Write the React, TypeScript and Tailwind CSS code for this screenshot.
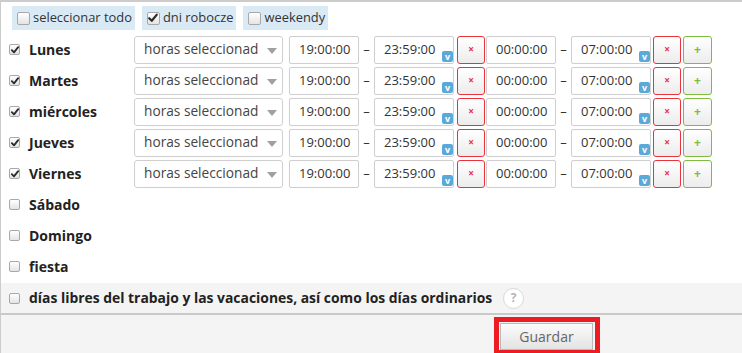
import React from "react";

function Box({ checked, size = 11 }: { checked?: boolean; size?: number }) {
  return (
    <span
      className="relative inline-flex shrink-0 items-center justify-center rounded-[2px] border border-[#a8a8a8] bg-gradient-to-b from-white to-[#e4e4e4]"
      style={{ width: size, height: size }}
    >
      {checked && (
        <svg viewBox="0 0 12 12" className="absolute" style={{ width: size - 1, height: size - 1 }}>
          <path d="M2.2 6.2 L4.8 8.8 L9.8 2.6" fill="none" stroke="#2b2b2b" strokeWidth="2.2" strokeLinecap="round" strokeLinejoin="round" />
        </svg>
      )}
    </span>
  );
}

function Chip({ label, checked }: { label: string; checked?: boolean }) {
  return (
    <div className="flex h-[24px] items-center gap-[3px] bg-[#daeaf5] pl-[5px] pr-[3px] text-[12.9px] text-[#333]">
      <Box checked={checked} size={13} />
      <span>{label}</span>
    </div>
  );
}

function Vbadge() {
  return (
    <span className="absolute bottom-[1px] right-[0px] flex h-[11px] w-[11px] items-center justify-center rounded-[2px] bg-[#5aa9d8] text-[9px] font-bold leading-none text-white">
      v
    </span>
  );
}

function TimeInput({ value, w, badge }: { value: string; w: number; badge?: boolean }) {
  return (
    <div
      className="relative flex h-[28px] shrink-0 items-center rounded-[2px] border border-[#cfcfcf] bg-white pl-[9px] text-[13px] text-[#333]"
      style={{ width: w }}
    >
      {value}
      {badge && <Vbadge />}
    </div>
  );
}

function XBtn() {
  return (
    <div className="flex h-[28px] w-[28px] shrink-0 items-center justify-center rounded-[3px] border border-[#e8333b] bg-gradient-to-b from-white to-[#ececec] text-[10px] font-bold text-[#e8333b]">
      ×
    </div>
  );
}

function PlusBtn() {
  return (
    <div className="flex h-[28px] w-[29px] shrink-0 items-center justify-center rounded-[3px] border border-[#7dbd3b] bg-gradient-to-b from-white to-[#ececec] text-[12px] font-bold text-[#7dbd3b]">
      +
    </div>
  );
}

function Dash() {
  return <span className="w-[15px] shrink-0 text-center text-[13px] text-[#333]">–</span>;
}

function DayRow({ label, checked, inputs }: { label: string; checked?: boolean; inputs?: boolean }) {
  return (
    <div className="flex h-[31px] items-center">
      <div className="flex w-[133px] shrink-0 items-center pl-[8px]">
        <Box checked={checked} />
        <span className="ml-[9px] text-[14px] font-bold text-[#222]">{label}</span>
      </div>
      {inputs && (
        <div className="flex items-center">
          <div className="relative flex h-[28px] w-[149px] shrink-0 items-center rounded-[3px] border border-[#cfcfcf] bg-white pl-[9px] text-[13.7px] text-[#444]">
            horas seleccionad
            <svg viewBox="0 0 10 6" className="absolute right-[5px] top-[11px] h-[6px] w-[10px]">
              <path d="M0 0 L10 0 L5 6 Z" fill="#a0a0a0" />
            </svg>
          </div>
          <div className="w-[6px]" />
          <TimeInput value="19:00:00" w={70} />
          <Dash />
          <TimeInput value="23:59:00" w={80} badge />
          <div className="w-[3px]" />
          <XBtn />
          <div className="w-[1px]" />
          <TimeInput value="00:00:00" w={70} />
          <Dash />
          <TimeInput value="07:00:00" w={80} badge />
          <div className="w-[2px]" />
          <XBtn />
          <div className="w-[2px]" />
          <PlusBtn />
        </div>
      )}
    </div>
  );
}

export default function App() {
  return (
    <div
      className="h-[353px] w-[742px] overflow-hidden border-l border-t-2 border-[#cccccc] bg-white"
      style={{ fontFamily: "'Open Sans', 'Noto Sans', sans-serif" }}
    >
      <div className="flex gap-[7px] pl-[11px] pt-[4px]">
        <Chip label="seleccionar todo" />
        <Chip label="dni robocze" checked />
        <Chip label="weekendy" />
      </div>
      <div className="h-[4px]" />
      <DayRow label="Lunes" checked inputs />
      <DayRow label="Martes" checked inputs />
      <DayRow label="miércoles" checked inputs />
      <DayRow label="Jueves" checked inputs />
      <DayRow label="Viernes" checked inputs />
      <DayRow label="Sábado" />
      <DayRow label="Domingo" />
      <DayRow label="fiesta" />
      <div className="mt-[1px] flex h-[30px] items-center bg-[#f4f4f4] pl-[8px]">
        <Box />
        <span className="ml-[9px] text-[13.9px] font-bold text-[#222]">
          días libres del trabajo y las vacaciones, así como los días ordinarios
        </span>
        <span className="ml-[11px] flex h-[21px] w-[21px] items-center justify-center rounded-full border border-[#d8d8d8] bg-white text-[12px] font-bold text-[#b5b5b5]">
          ?
        </span>
      </div>
      <div className="h-[2px] bg-[#c9c9c9]" />
      <div className="flex h-[40px] bg-[#f4f4f4] pl-[493px] pt-[2px]">
        <div className="h-[38px] w-[106px] border-[5px] border-[#ec1c24] bg-[#f4f4f4] pt-[1px] pl-[1px]">
          <div className="flex h-[27px] w-[93px] items-center justify-center border border-[#b9b9b9] bg-gradient-to-b from-[#fbfbfb] to-[#e3e3e3] text-[14px] text-[#666]">
            Guardar
          </div>
        </div>
      </div>
    </div>
  );
}
